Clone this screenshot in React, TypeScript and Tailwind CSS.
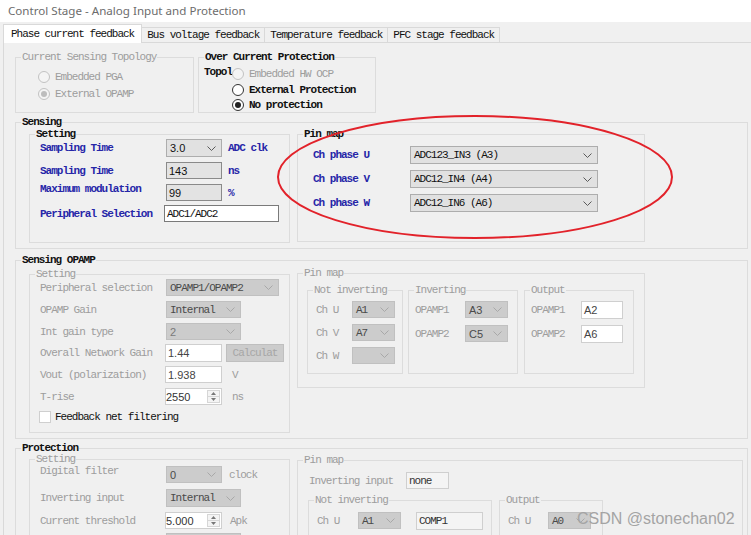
import type { ReactNode } from "react";

const BLUE = "text-[#2626a8] font-bold";
const DIS = "text-[#9d9d9d]";
const SANS = "font-['Liberation_Sans',Arial,sans-serif] tracking-normal text-[11px]";

const FIELD: Record<string, string> = {
  white: "bg-white border-[#7a7a7a] text-[#111]",
  ro: "bg-[#e3e3e3] border-[#8a8a8a] text-[#111]",
  dis: "bg-white border-[#cfcfcf] text-[#444]",
  off: "bg-[#f4f4f4] border-[#cfcfcf] text-[#333]",
};

function Chevron({ dim }: { dim?: boolean }) {
  return (
    <svg width="9" height="5" viewBox="0 0 9 5" className="shrink-0">
      <path d="M0.5 0.5 L4.5 4.5 L8.5 0.5" fill="none" stroke={dim ? "#a8a8a8" : "#5a5a5a"} strokeWidth="1" />
    </svg>
  );
}

function Group({
  title,
  className = "",
  titleClass = "",
  children,
}: {
  title: string;
  className?: string;
  titleClass?: string;
  children?: ReactNode;
}) {
  return (
    <div className={`relative shrink-0 border border-[#dcdcdc] ${className}`}>
      <span className={`absolute left-[5px] top-[-7px] bg-[#f0f0f0] px-px leading-[12px] whitespace-nowrap ${titleClass}`}>
        {title}
      </span>
      {children}
    </div>
  );
}

function Radio({
  label,
  disabled,
  checked,
  bold,
  className = "",
}: {
  label: string;
  disabled?: boolean;
  checked?: boolean;
  bold?: boolean;
  className?: string;
}) {
  return (
    <div className={`flex items-center h-[12px] ${className}`}>
      <span
        className={`w-[12px] h-[12px] rounded-full border flex items-center justify-center shrink-0 ${
          disabled ? "border-[#c2c2c2] bg-[#f4f4f4]" : "border-[#333] bg-white"
        }`}
      >
        {checked && <span className={`w-[6px] h-[6px] rounded-full ${disabled ? "bg-[#bdbdbd]" : "bg-[#222]"}`} />}
      </span>
      <span className={`ml-[5px] whitespace-nowrap ${disabled ? DIS : bold ? "font-bold" : ""}`}>{label}</span>
    </div>
  );
}

function Combo({
  value,
  className = "",
  disabled,
  sans,
  muted,
}: {
  value: string;
  className?: string;
  disabled?: boolean;
  sans?: boolean;
  muted?: boolean;
}) {
  return (
    <div
      className={`flex items-center justify-between shrink-0 border pl-[3px] pr-[5px] ${
        disabled ? "bg-[#cccccc] border-[#c0c0c0]" : "bg-[#e1e1e1] border-[#adadad]"
      } ${className}`}
    >
      <span className={`whitespace-nowrap ${sans ? SANS : ""} ${muted ? "text-[#7a7a7a]" : disabled ? "text-[#4a4a4a]" : "text-[#111]"}`}>
        {value}
      </span>
      <Chevron dim={disabled} />
    </div>
  );
}

function Field({
  value,
  className = "",
  variant = "white",
  sans,
}: {
  value: string;
  className?: string;
  variant?: string;
  sans?: boolean;
}) {
  return (
    <div className={`flex items-center shrink-0 border pl-[2px] ${FIELD[variant]} ${className}`}>
      <span className={`whitespace-nowrap ${sans ? SANS : ""}`}>{value}</span>
    </div>
  );
}

function Spin({ value, className = "" }: { value: string; className?: string }) {
  return (
    <div className={`flex items-stretch shrink-0 border border-[#cfcfcf] bg-white ${className}`}>
      <span className={`flex-1 flex items-center text-[#333] ${SANS}`}>{value}</span>
      <div className="w-[13px] my-px mr-px flex flex-col border border-[#d6d6d6]">
        <div className="flex-1 flex items-center justify-center bg-[#f4f4f4] border-b border-[#d6d6d6]">
          <svg width="5" height="3" viewBox="0 0 5 3">
            <path d="M0 3 L2.5 0 L5 3 Z" fill="#777" />
          </svg>
        </div>
        <div className="flex-1 flex items-center justify-center bg-[#f4f4f4]">
          <svg width="5" height="3" viewBox="0 0 5 3">
            <path d="M0 0 L2.5 3 L5 0 Z" fill="#777" />
          </svg>
        </div>
      </div>
    </div>
  );
}

export default function App() {
  return (
    <div className="relative w-[751px] h-[535px] overflow-hidden bg-[#f0f0f0] font-['Liberation_Mono',monospace] text-[11px] leading-[12px] tracking-[-1px] text-[#111]">
      <div className="h-[22px] bg-white flex items-center pl-[8px] font-['Noto_Sans',sans-serif] text-[11.6px] tracking-normal text-[#6c6c6c]">
        Control Stage - Analog Input and Protection
      </div>

      {/* tabs */}
      <div className="flex items-end h-[20px] pl-[3px]">
        <div className="relative z-10 -mb-px h-[19px] flex items-center px-[7px] bg-white border-l border-t border-r border-[#d9d9d9]">
          Phase current feedback
        </div>
        {["Bus voltage feedback", "Temperature feedback", "PFC stage feedback"].map((t) => (
          <div key={t} className="h-[15px] flex items-center px-[5px] border-t border-r border-[#d9d9d9]">
            {t}
          </div>
        ))}
      </div>

      <div className="ml-[3px] h-[493px] border-l border-t border-[#d9d9d9] pl-[11px]">
        {/* topology */}
        <div className="flex mt-[14px]">
          <Group title="Current Sensing Topology" titleClass={DIS} className="w-[179px] h-[56px] pl-[22px] pt-[13px]">
            <Radio label="Embedded PGA" disabled />
            <Radio label="External OPAMP" disabled checked className="mt-[5px]" />
          </Group>
          <Group title="Over Current Protection" titleClass="font-bold" className="ml-[4px] w-[178px] h-[56px] pl-[5px] pt-[8px]">
            <div className="flex items-center">
              <span className="font-bold w-[28px] mb-[3px]">Topol</span>
              <Radio label="Embedded HW OCP" disabled />
            </div>
            <Radio label="External Protection" bold className="ml-[28px] mt-[3px]" />
            <Radio label="No protection" bold checked className="ml-[28px] mt-[3px]" />
          </Group>
        </div>

        {/* Sensing */}
        <Group title="Sensing" titleClass="font-bold" className="mt-[9px] w-[733px] h-[127px] pl-[13px] pt-[11px] flex items-start">
          <Group title="Setting" titleClass="font-bold" className="w-[261px] h-[109px] pl-[10px] pt-[4px]">
            <div className="flex items-center h-[18px]">
              <span className={`w-[126px] ${BLUE}`}>Sampling Time</span>
              <Combo value="3.0" sans className="w-[56px] h-[18px]" />
              <span className={`ml-[6px] ${BLUE}`}>ADC clk</span>
            </div>
            <div className="flex items-center h-[17px] mt-[5px]">
              <span className={`w-[126px] ${BLUE}`}>Sampling Time</span>
              <Field value="143" variant="ro" sans className="w-[56px] h-[17px]" />
              <span className={`ml-[6px] ${BLUE}`}>ns</span>
            </div>
            <div className="flex items-center h-[17px] mt-[5px]">
              <span className={`w-[126px] mb-[8px] ${BLUE}`}>Maximum modulation</span>
              <Field value="99" variant="ro" sans className="w-[56px] h-[17px]" />
              <span className={`ml-[6px] ${BLUE}`}>%</span>
            </div>
            <div className="flex items-center h-[17px] mt-[4px]">
              <span className={`w-[124px] ${BLUE}`}>Peripheral Selection</span>
              <Field value="ADC1/ADC2" className="w-[115px] h-[17px]" />
            </div>
          </Group>
          <Group title="Pin map" titleClass="font-bold" className="ml-[7px] w-[348px] h-[108px] pl-[15px] pt-[11px]">
            {[
              ["Ch phase U", "ADC123_IN3 (A3)"],
              ["Ch phase V", "ADC12_IN4 (A4)"],
              ["Ch phase W", "ADC12_IN6 (A6)"],
            ].map(([l, v], i) => (
              <div key={l} className={`flex items-center h-[18px] ${i ? "mt-[6px]" : ""}`}>
                <span className={`w-[97px] ${BLUE}`}>{l}</span>
                <Combo value={v} className="w-[188px] h-[18px]" />
              </div>
            ))}
          </Group>
        </Group>

        {/* Sensing OPAMP */}
        <Group title="Sensing OPAMP" titleClass="font-bold" className="mt-[11px] w-[733px] h-[179px] pl-[13px] flex items-start">
          <Group title="Setting" titleClass={DIS} className="mt-[13px] w-[261px] h-[159px] pl-[10px] pt-[4px]">
            <div className="flex items-center h-[17px]">
              <span className={`w-[126px] ${DIS}`}>Peripheral selection</span>
              <Combo value="OPAMP1/OPAMP2" disabled className="w-[113px] h-[17px]" />
            </div>
            <div className="flex items-center h-[17px] mt-[5px]">
              <span className={`w-[126px] ${DIS}`}>OPAMP Gain</span>
              <Combo value="Internal" disabled className="w-[75px] h-[17px]" />
            </div>
            <div className="flex items-center h-[17px] mt-[5px]">
              <span className={`w-[126px] ${DIS}`}>Int gain type</span>
              <Combo value="2" disabled sans muted className="w-[75px] h-[17px]" />
            </div>
            <div className="flex items-center h-[18px] mt-[4px]">
              <span className={`w-[125px] ${DIS}`}>Overall Network Gain</span>
              <Field value="1.44" variant="dis" sans className="w-[57px] h-[18px]" />
              <div className="ml-[4px] w-[58px] h-[18px] flex items-center justify-center bg-[#cccccc] border border-[#bfbfbf] text-[#a6a6a6]">
                Calculat
              </div>
            </div>
            <div className="flex items-center h-[17px] mt-[4px]">
              <span className={`w-[125px] ${DIS}`}>Vout (polarization)</span>
              <Field value="1.938" variant="dis" sans className="w-[57px] h-[17px]" />
              <span className={`ml-[10px] ${DIS}`}>V</span>
            </div>
            <div className="flex items-center h-[17px] mt-[5px]">
              <span className={`w-[125px] ${DIS}`}>T-rise</span>
              <Spin value="2550" className="w-[57px] h-[17px]" />
              <span className={`ml-[10px] ${DIS}`}>ns</span>
            </div>
            <div className="flex items-center h-[12px] mt-[6px] -ml-px">
              <span className="w-[12px] h-[12px] bg-white border border-[#cfcfcf]" />
              <span className="ml-[4px]">Feedback net filtering</span>
            </div>
          </Group>

          <Group title="Pin map" titleClass={DIS} className="ml-[7px] mt-[12px] w-[348px] h-[115px] pl-[9px] pt-[16px] flex items-start">
            <Group title="Not inverting" titleClass={DIS} className="w-[96px] h-[84px] pl-[8px] pt-[10px]">
              {[
                ["Ch U", "A1"],
                ["Ch V", "A7"],
                ["Ch W", ""],
              ].map(([l, v], i) => (
                <div key={l} className={`flex items-center h-[17px] ${i ? "mt-[6px]" : ""}`}>
                  <span className={`w-[36px] ${DIS}`}>{l}</span>
                  <Combo value={v} disabled className="w-[43px] h-[17px]" />
                </div>
              ))}
            </Group>
            <Group title="Inverting" titleClass={DIS} className="ml-[5px] w-[110px] h-[84px] pl-[6px] pt-[10px]">
              <div className="flex items-center h-[17px]">
                <span className={`w-[50px] ${DIS}`}>OPAMP1</span>
                <Combo value="A3" disabled sans className="w-[43px] h-[17px]" />
              </div>
              <div className="flex items-center h-[17px] mt-[7px]">
                <span className={`w-[50px] ${DIS}`}>OPAMP2</span>
                <Combo value="C5" disabled sans className="w-[43px] h-[17px]" />
              </div>
            </Group>
            <Group title="Output" titleClass={DIS} className="ml-[6px] w-[110px] h-[84px] pl-[6px] pt-[10px]">
              <div className="flex items-center h-[18px]">
                <span className={`w-[50px] ${DIS}`}>OPAMP1</span>
                <Field value="A2" variant="dis" sans className="w-[42px] h-[18px]" />
              </div>
              <div className="flex items-center h-[18px] mt-[6px]">
                <span className={`w-[50px] ${DIS}`}>OPAMP2</span>
                <Field value="A6" variant="dis" sans className="w-[42px] h-[18px]" />
              </div>
            </Group>
          </Group>
        </Group>

        {/* Protection */}
        <Group title="Protection" titleClass="font-bold" className="mt-[9px] w-[733px] h-[120px] pl-[13px] flex items-start">
          <Group title="Setting" titleClass={DIS} className="mt-[10px] w-[261px] h-[100px] pl-[10px] pt-[6px]">
            <div className="flex items-center h-[17px]">
              <span className={`w-[126px] mb-[8px] ${DIS}`}>Digital filter</span>
              <Combo value="0" disabled sans className="w-[56px] h-[17px]" />
              <span className={`ml-[7px] ${DIS}`}>clock</span>
            </div>
            <div className="flex items-center h-[18px] mt-[6px]">
              <span className={`w-[126px] ${DIS}`}>Inverting input</span>
              <Combo value="Internal" disabled className="w-[75px] h-[18px]" />
            </div>
            <div className="flex items-center h-[17px] mt-[5px]">
              <span className={`w-[125px] ${DIS}`}>Current threshold</span>
              <Spin value="5.000" className="w-[57px] h-[17px]" />
              <span className={`ml-[8px] ${DIS}`}>Apk</span>
            </div>
            <div className="flex items-center h-[17px] mt-[4px] pl-[126px]">
              <Combo value="" disabled className="w-[75px] h-[17px]" />
            </div>
          </Group>

          <Group title="Pin map" titleClass={DIS} className="ml-[7px] mt-[11px] w-[446px] h-[100px] pl-[11px] pt-[11px]">
            <div className="flex items-center h-[17px]">
              <span className={`w-[97px] ${DIS}`}>Inverting input</span>
              <Field value="none" variant="off" className="w-[43px] h-[17px]" />
            </div>
            <div className="flex items-start mt-[11px] -ml-px">
              <Group title="Not inverting" titleClass={DIS} className="w-[184px] h-[60px] pl-[8px] pt-[11px]">
                <div className="flex items-center h-[17px]">
                  <span className={`w-[41px] ${DIS}`}>Ch U</span>
                  <Combo value="A1" disabled className="w-[43px] h-[17px]" />
                  <Field value="COMP1" variant="off" className="ml-[15px] w-[67px] h-[18px]" />
                </div>
              </Group>
              <Group title="Output" titleClass={DIS} className="ml-[7px] w-[104px] h-[60px] pl-[8px] pt-[11px]">
                <div className="flex items-center h-[17px]">
                  <span className={`w-[40px] ${DIS}`}>Ch U</span>
                  <Combo value="A0" disabled className="w-[43px] h-[17px]" />
                </div>
              </Group>
            </div>
          </Group>
        </Group>
      </div>

      <svg className="absolute left-0 top-0 pointer-events-none" width="751" height="535">
        <ellipse cx="475" cy="177" rx="197" ry="61" fill="none" stroke="#e2222a" strokeWidth="2" />
      </svg>

      <div className="absolute left-[577px] top-[510px] font-['Liberation_Sans',Arial,sans-serif] text-[16px] leading-[18px] tracking-normal text-[#a4a4a4]">
        CSDN @stonechan02
      </div>
    </div>
  );
}
